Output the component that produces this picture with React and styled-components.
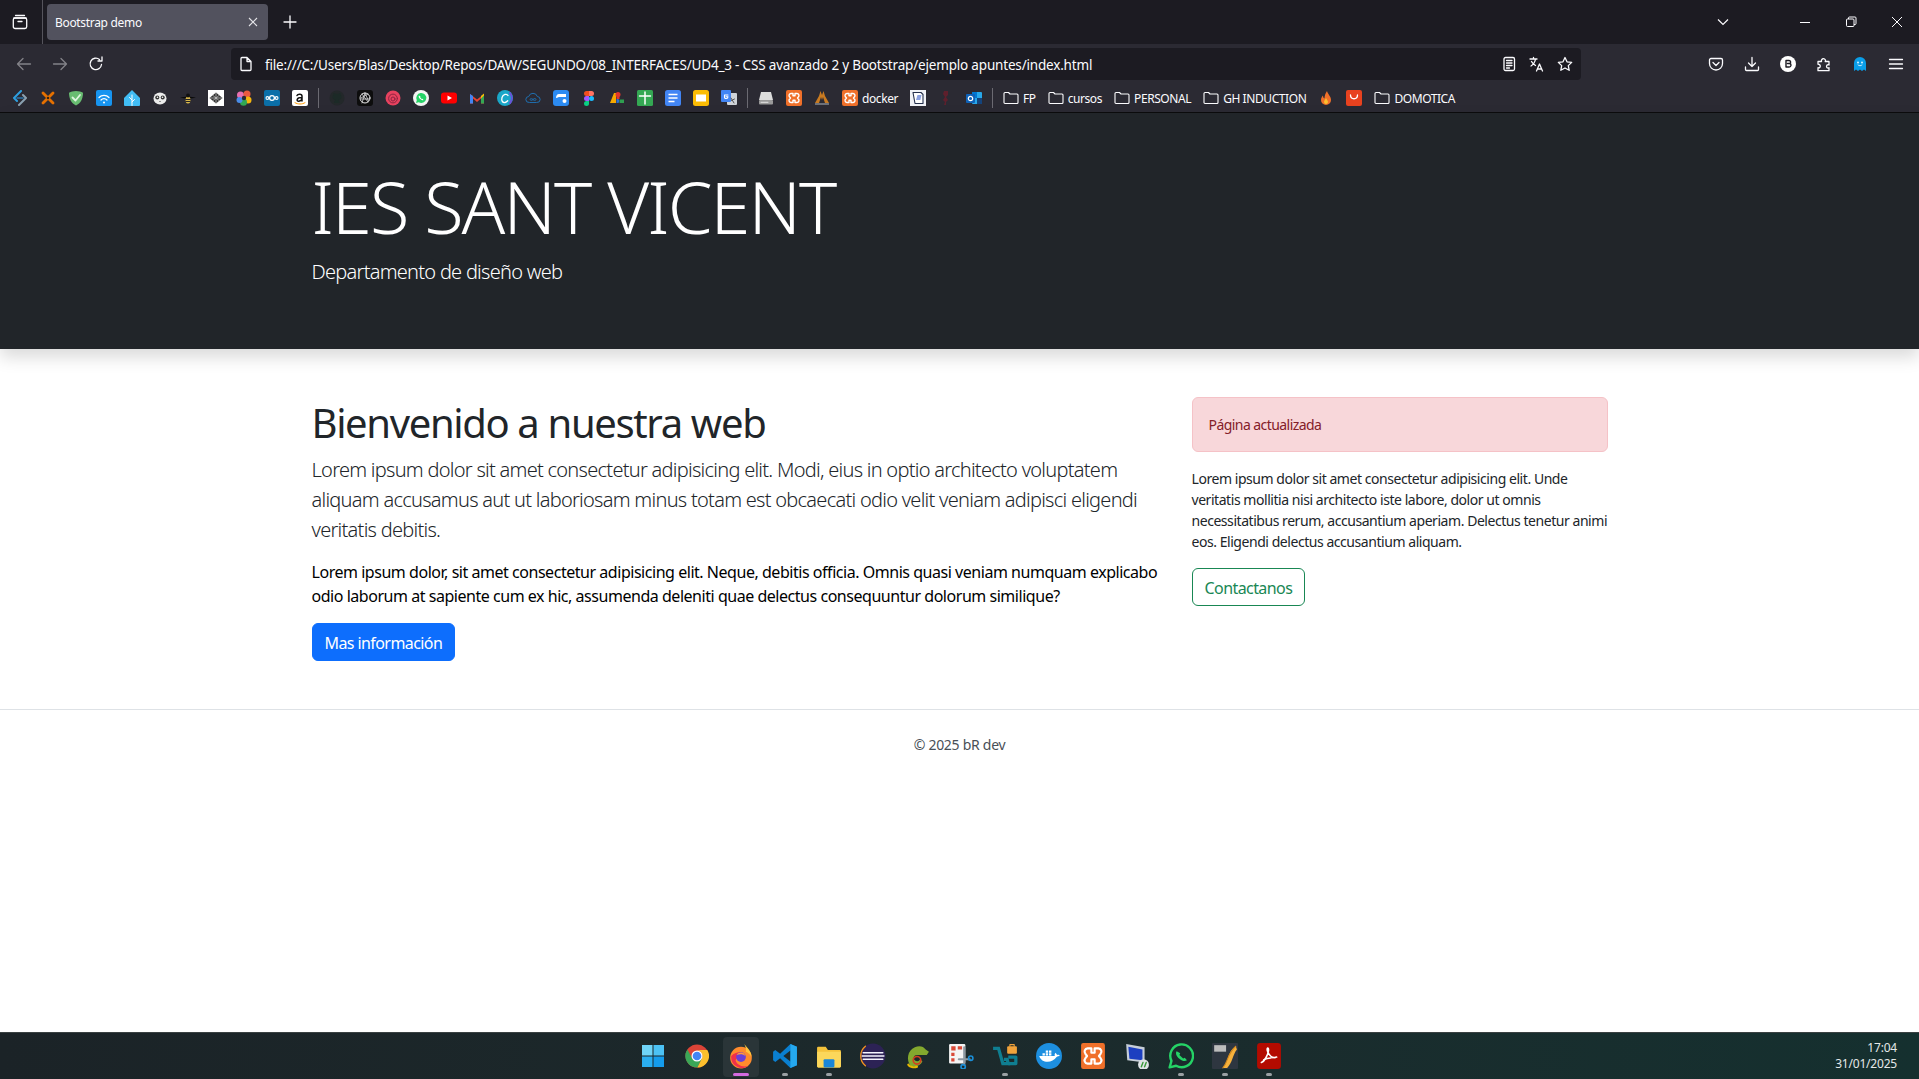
import React from "react";
import styled, { createGlobalStyle } from "styled-components";

const Global = createGlobalStyle`
  html, body { margin: 0; padding: 0; background: #fff; }
  * { box-sizing: border-box; }
  body { font-family: "Noto Sans", "Open Sans", sans-serif; color: #212529; overflow: hidden; }
`;

const Screen = styled.div`
  width: 1919px; height: 1079px; display: flex; flex-direction: column; overflow: hidden; background: #fff;
`;

/* Browser chrome */
const TitleBar = styled.div`
  height: 44px; flex: none; background: #1c1b22; display: flex; align-items: center; color: #fbfbfe;
`;
const TabGroupBtn = styled.div`
  width: 43px; height: 44px; display: flex; align-items: center; justify-content: center; padding-right: 3px; border-right: 1px solid #55545c; margin-right: 4px;
`;
const Tab = styled.div`
  width: 221px; height: 36px; border-radius: 4px; background: #52525e; display: flex; align-items: center; justify-content: space-between;
  padding: 0 8px 0 8px; font-size: 12px; letter-spacing: -0.32px; color: #fbfbfe;
`;
const PlusBtn = styled.div`
  width: 16px; height: 16px; margin-left: 14px; display: flex;
`;
const WindowCtrls = styled.div`
  margin-left: auto; margin-right: -1px; display: flex; align-items: center;
`;
const CtrlBtn = styled.div`
  width: ${(p) => p.$w || 46}px; display: flex; justify-content: center;
`;

const NavBar = styled.div`
  height: 40px; flex: none; background: #2b2a33; display: flex; align-items: center; color: #fbfbfe;
`;
const NavBtns = styled.div`
  width: 231px; padding-left: 16px; display: flex; gap: 20px; flex: none;
`;
const NavIcon = styled.div`
  width: 16px; height: 16px; display: flex; opacity: ${(p) => (p.$dim ? 0.42 : 1)};
`;
const UrlBar = styled.div`
  width: 1350px; height: 32px; background: #1c1b22; border-radius: 4px; display: flex; align-items: center; padding: 0 8px 0 7px; flex: none;
`;
const UrlText = styled.div`
  margin-left: 11px; padding-top: 2px; font-size: 13.5px; letter-spacing: -0.18px; white-space: nowrap; color: #fbfbfe; flex: 1;
`;
const UrlActions = styled.div`
  display: flex; gap: 12px;
`;
const ToolIcons = styled.div`
  margin-left: auto; padding-right: 15px; display: flex; gap: 20px;
`;

const BookmarkBar = styled.div`
  height: 29px; flex: none; background: #2b2a33; border-bottom: 1px solid #0c0c0d; display: flex; align-items: center; padding: 0 0 0 6px; color: #fbfbfe;
`;
const BookmarkItem = styled.div`
  display: flex; align-items: center; gap: 4px; padding: 0 6px; font-size: 12px; letter-spacing: -0.42px; white-space: nowrap; height: 16px;
`;
const BookmarkSep = styled.div`
  width: 9px; height: 20px; flex: none; display: flex; justify-content: center;
  &::before { content: ""; width: 1px; background: #6b6a72; }
`;

/* Page */
const Page = styled.div`
  flex: 1; display: flex; flex-direction: column; min-height: 0;
`;
const Hero = styled.header`
  background: #212529; color: #fff; padding: 48px 0; box-shadow: 0 8px 16px rgba(0,0,0,.15); position: relative;
`;
const Container = styled.div`
  width: 1320px; margin: 0 auto; padding: 0 12px;
`;
const HeroTitle = styled.h1`
  margin: 0 0 8px; padding-top: 2px; font-size: 72px; line-height: 1.2; font-weight: 300; letter-spacing: -1.9px;
`;
const HeroLead = styled.p`
  margin: 0 0 14px; font-size: 20px; line-height: 30px; font-weight: 300; letter-spacing: -0.74px;
`;
const Main = styled.main`
  padding: 48px 0;
`;
const Row = styled.div`
  display: grid; grid-template-columns: 868px 416px; column-gap: 12px;
`;
const Heading = styled.h2`
  margin: 0 0 8px; padding-top: 2px; font-size: 40px; line-height: 1.2; font-weight: 400; letter-spacing: -1.35px;
`;
const Lead = styled.p`
  margin: 0 0 15px; font-size: 20px; line-height: 30px; font-weight: 300; letter-spacing: -0.73px; width: 860px;
`;
const Body = styled.p`
  margin: 0 0 15px; font-size: 16px; line-height: 24px; letter-spacing: -0.465px; color: #000;
`;
const Button = styled.span`
  display: inline-block; height: 38px; padding: 7px 12px 5px; border-radius: 6px; font-size: 16px; line-height: 24px; letter-spacing: -0.58px;
  border: 1px solid ${(p) => (p.$outline ? "#198754" : "#0d6efd")};
  background: ${(p) => (p.$outline ? "transparent" : "#0d6efd")};
  color: ${(p) => (p.$outline ? "#198754" : "#fff")};
`;
const Alert = styled.div`
  height: 55px; padding: 16px; margin-bottom: 16px; background: #f8d7da; border: 1px solid #f5c2c7; border-radius: 6px; color: #842029;
  font-size: 14px; line-height: 21px; letter-spacing: -0.56px;
`;
const Small = styled.p`
  margin: 0 0 16px; font-size: 14px; line-height: 21px; letter-spacing: -0.45px;
`;
const Footer = styled.footer`
  border-top: 1px solid #dee2e6; padding: 24px 0; text-align: center; font-size: 14px; line-height: 21px; letter-spacing: -0.28px; color: #495057;
`;

/* Taskbar */
const Taskbar = styled.div`
  height: 47px; flex: none; position: relative; border-top: 1px solid #3a4142; background: linear-gradient(90deg, #1b2327 0%, #1c2a2c 50%, #15302f 100%);
  display: flex; justify-content: center; align-items: center;
`;
const TaskIcons = styled.div`
  display: flex; margin-left: 3px;
`;
const TaskItem = styled.div`
  width: 44px; height: 44px; display: flex; align-items: center; justify-content: center; position: relative;
  & > svg { position: relative; }
  &::before {
    content: ""; display: ${(p) => (p.$active ? "block" : "none")}; position: absolute; top: 3px; bottom: 1px; left: 4px; right: 4px; border-radius: 4px; background: #2a3538;
  }
  &::after {
    content: ""; display: ${(p) => (p.$open || p.$active ? "block" : "none")}; position: absolute; bottom: 2px; left: 50%; height: 3px; border-radius: 2px;
    width: ${(p) => (p.$active ? 16 : 6)}px; transform: translateX(-50%); background: ${(p) => (p.$active ? "#d36be0" : "#9aa0a3")};
  }
`;
const Clock = styled.div`
  position: absolute; right: 22px; top: 7px; text-align: right; color: #e4e8e8; font-size: 12px; line-height: 16px; letter-spacing: -0.2px;
`;

const S = ({ children, v = 16, size, fill = "none", stroke = "none", sw }) => (
  <svg width={size || v} height={size || v} viewBox={`0 0 ${v} ${v}`} fill={fill} stroke={stroke} strokeWidth={sw} strokeLinecap="round" strokeLinejoin="round">{children}</svg>
);
const L = ({ children }) => <S stroke="#fbfbfe" sw={1.3}>{children}</S>;

const Folder = () => <S stroke="#fbfbfe" sw={1.1}><path d="M1 3.5a1 1 0 0 1 1-1h3.5l1.5 1.5h7a1 1 0 0 1 1 1v7.5a1 1 0 0 1-1 1H2a1 1 0 0 1-1-1z"/></S>;
const Xampp = () => <S><rect width="16" height="16" rx="2" fill="#f0702a"/><path d="M5 3.5h2v2.2h2V3.5h2a2 2 0 0 1 1.4 3.4L11.5 8l.9 1.1A2 2 0 0 1 11 12.5H9v-2.2H7v2.2H5a2 2 0 0 1-1.4-3.4L4.5 8l-.9-1.1A2 2 0 0 1 5 3.5z" stroke="#fff" strokeWidth="1.4"/></S>;

const group1 = [
  <S><path d="M9 1 2 8l3 3" stroke="#2d9fe0" strokeWidth="2"/><path d="M7 15l7-7-3-3" stroke="#8aa0b0" strokeWidth="2"/><path d="M5 8h6" stroke="#2d78b0" strokeWidth="1.6"/></S>,
  <S><path d="M3 3l10 10" stroke="#e57000" strokeWidth="2.800"/><path d="M13 3 3 13" stroke="#e57000" strokeWidth="2.800"/><path d="M6.500 8 8 6.500 9.500 8 8 9.500z" fill="#1a1a1a"/></S>,
  <S><path d="M8 1c3 0 5 .8 7 1.8C15 9 12.500 13.500 8 15.500 3.500 13.500 1 9 1 2.800 3 1.800 5 1 8 1z" fill="#68bc71"/><path d="M4.500 7.500 7.500 10.500 12 5" stroke="#dff5e0" strokeWidth="1.8"/></S>,
  <S><rect width="16" height="16" rx="2" fill="#1794f0"/><path d="M3 7.500a7 7 0 0 1 10 0M5 10a4 4 0 0 1 6 0" stroke="#fff" strokeWidth="1.2"/><circle cx="8" cy="12.500" r="1" fill="#fff"/></S>,
  <S><path d="M8 0 16 8v7a1 1 0 0 1-1 1H1a1 1 0 0 1-1-1V8z" fill="#41bdf5"/><path d="M8 15.500V5M8 10 5.500 7.500M8 12l2.500-2.500" stroke="#fff" strokeWidth="1"/></S>,
  <S><ellipse cx="8" cy="8.500" rx="6.500" ry="6" fill="#ececec"/><circle cx="5.300" cy="7.500" r="2" fill="#333"/><circle cx="10.700" cy="7.500" r="2" fill="#333"/><circle cx="5.500" cy="7.300" r=".8" fill="#fff"/><circle cx="10.500" cy="7.300" r=".8" fill="#fff"/><path d="M7 11h2l-1 1z" fill="#333"/></S>,
  <S><path d="M0 7.500c3-.5 5-.8 8-.8s5 .3 8 .8c-3 .8-5 1-8 1s-5-.2-8-1z" fill="#0a0a0a"/><ellipse cx="8" cy="10" rx="2.500" ry="3.500" fill="#d8b64a"/><path d="M5.600 9.500h4.800M5.800 11.500h4.400" stroke="#222" strokeWidth="1"/><circle cx="8" cy="5.500" r="2" fill="#111"/></S>,
  <S><rect width="16" height="16" fill="#fff"/><path d="M8 2.500 14.500 8 8 13.500 1.500 8z" fill="#333"/><path d="M2 8h12M8 3v10M5 5.500l6 5M11 5.500l-6 5" stroke="#ccc" strokeWidth=".7"/></S>,
  <S><circle cx="4.500" cy="5" r="3.500" fill="#e86fb0"/><circle cx="11" cy="4" r="3.500" fill="#ea5a3f"/><circle cx="12" cy="10" r="3.500" fill="#f6b60d"/><circle cx="7.500" cy="12.300" r="3.500" fill="#31a853"/><circle cx="3.500" cy="10" r="3" fill="#4a8ce8"/><circle cx="8" cy="8" r="2.200" fill="#2b2a33"/></S>,
  <S><rect width="16" height="16" rx="2" fill="#0b6fa8"/><circle cx="8" cy="8" r="2.400" stroke="#fff" strokeWidth="1.300"/><circle cx="3.400" cy="8" r="1.400" stroke="#fff" strokeWidth="1.100"/><circle cx="12.600" cy="8" r="1.400" stroke="#fff" strokeWidth="1.100"/></S>,
  <S><rect width="16" height="16" rx="2" fill="#fff"/><path d="M5 5.500c.6-1.500 5-2 5 .8V11M10 7.500c-6-.2-5.700 4-3.200 3.700 1.500-.2 3.200-1.500 3.200-3" stroke="#111" strokeWidth="1.500"/><path d="M3 12.700c3 1.800 7 1.800 10 0" stroke="#f90" strokeWidth="1"/></S>,
];
const group2 = [
  <S><circle cx="8" cy="8" r="7.500" fill="#23282a"/><path d="M5 13c0-2 1-2.500 1.500-3-2-.3-3-1.300-3-3.300 0-1 .4-1.500.8-2 0-.8 0-1.200.3-1.700.8 0 1.400.5 1.900.8h3c.5-.3 1-.8 1.900-.8.300.5.300.9.300 1.700.4.500.8 1 .8 2 0 2-1 3-3 3.300.5.500 1 1 1 3" fill="#1c2a27"/></S>,
  <S><rect width="16" height="16" rx="3" fill="#0d0d0d"/><circle cx="8" cy="8" r="5" stroke="#e8e8e8" strokeWidth="1"/><path d="M8 3 5 13M11 4 4 8M12.500 9l-8 0M5 4l6 8M11.500 11 8 3" stroke="#d8d8d8" strokeWidth=".8"/></S>,
  <S><circle cx="8" cy="8" r="7.500" fill="#e8425f"/><circle cx="8" cy="8.500" r="4.400" stroke="#8e2440" strokeWidth="1"/><circle cx="8" cy="9" r="2" stroke="#8e2440" strokeWidth="1"/></S>,
  <S><circle cx="8" cy="8" r="8" fill="#f4f4f4"/><path d="M3 13l.8-2.800A5 5 0 1 1 5.800 12.300z" fill="#25d366"/><path d="M6 5.500c-.8 1 0 2.500 1.200 3.600 1.200 1.100 2.500 1.500 3.300.8l-1-1.200-.8.400-1.500-1.500.4-.8z" fill="#fff"/></S>,
  <S><rect y="2.500" width="16" height="11" rx="3" fill="#f00"/><path d="M6.500 5.500 11 8l-4.500 2.500z" fill="#fff"/></S>,
  <S><path d="M1 13.500V4l7 5.500L15 4v9.500h-3V8.500L8 12 4 8.500v5z" fill="#ea4335"/><path d="M1 13.500V4l3 2v7.500z" fill="#4285f4"/><path d="M15 13.500V4l-3 2v7.500z" fill="#34a853"/><path d="M12 6l3-2.500V5.500l-3 3z" fill="#fbbc04"/></S>,
  <S><circle cx="8" cy="8" r="8" fill="#1aa7c8"/><path d="M11 5.500C10 3.500 6 4 5 7.500s1 5.500 3 5c1.200-.3 2-1 2.700-1.800" stroke="#fff" strokeWidth="1.300"/><path d="M13 3a8 8 0 0 1 0 10" stroke="#6b4fd8" strokeWidth="2"/></S>,
  <S><path d="M4 12.500a3 3 0 0 1-.3-6 4.500 4.500 0 0 1 8.600 0 3 3 0 0 1-.3 6z" stroke="#1f6fb0" strokeWidth="1"/><path d="M8 9.500c-1-1.300-3-1-3 0s2 1.300 3 0 3-1.300 3 0-2 1.300-3 0z" stroke="#1f6fb0" strokeWidth=".9"/></S>,
  <S><rect width="16" height="16" rx="3" fill="#2c8bf2"/><path d="M3 8c0-2 1-4 3-4h7v3H7c-1.500 0-2 .5-4 1z" fill="#fff"/><circle cx="11.500" cy="11" r="2" fill="#fff"/></S>,
  <S><path d="M8 1h2.500a2.500 2.500 0 0 1 0 5H8z" fill="#ff7262"/><path d="M8 1H5.500a2.500 2.500 0 0 0 0 5H8z" fill="#f24e1e"/><path d="M8 6H5.500a2.500 2.500 0 0 0 0 5H8z" fill="#a259ff"/><circle cx="10.500" cy="8.500" r="2.500" fill="#1abcfe"/><path d="M8 11H5.500A2.500 2.500 0 1 0 8 13.500z" fill="#0acf83"/></S>,
  <S><path d="M1 13 5 3h2v10z" fill="#f6a800"/><rect x="7.500" y="3" width="3" height="6" fill="#e2352c"/><circle cx="9" cy="4.500" r="2.500" fill="#e2352c"/><path d="M7.500 9h2a3 3 0 0 1 0 4h-2z" fill="#2a6fdb"/><path d="M10.500 9.500h4.500V13h-4.500z" fill="#2f9e50"/></S>,
  <S><rect width="16" height="16" rx="1.500" fill="#34a853"/><path d="M8 2v12M2.500 6h11" stroke="#fff" strokeWidth="1.500"/></S>,
  <S><rect width="16" height="16" rx="2.500" fill="#4285f4"/><path d="M3.500 4.500h9M3.500 8h9M3.500 11.500h6" stroke="#fff" strokeWidth="1.400" strokeLinecap="butt"/></S>,
  <S><rect width="16" height="16" rx="2.500" fill="#fbbc04"/><rect x="3" y="4.500" width="10" height="7" fill="#fff"/></S>,
  <S><rect x="6" y="3" width="10" height="12" rx="1" fill="#cfd3d8"/><rect x="0" y="0" width="10" height="12" rx="1" fill="#4285f4"/><path d="M7 5H3.500v2.500c0 1.500 3.500 1.500 3.500-.8H5" stroke="#fff" strokeWidth="1.100"/><path d="M10 8l3 5M13.500 9l-3 1.500" stroke="#555" strokeWidth="1"/></S>,
];
const group3 = [
  <S><path d="M3 2h10l2 8H1z" fill="#dcdcdc"/><rect x="1" y="10" width="14" height="4.500" rx="1" fill="#9a9a9a"/><path d="M3 12.300h7" stroke="#e4e4e4"/></S>,
  <Xampp />,
  <S><path d="M1 13 5 6l1.500-5L8 5l1.500-4L11 6l4 7z" fill="#c97a20"/><path d="M5 13 7 7l1 3 1-3 2 6z" fill="#2b2a33"/><rect x="1" y="13" width="14" height="2" fill="#6d7078"/></S>,
];
const group4 = [
  <S><rect width="16" height="16" fill="#f0f2f6"/><path d="M3 2.500h8l2 2v9H5z" fill="#fff" stroke="#24304c" strokeWidth="1.100"/><path d="M6 10l1.500-5h4l-1.200 5z" fill="#8aa0e0"/></S>,
  <S><path d="M6 1h4v4L8 7l2 3-2 2v3H6l1-3-2-2 2-3-2-3z" fill="#5e1f2c"/></S>,
  <S><rect x="6" y="2" width="10" height="12" rx="1" fill="#28a8ea"/><rect x="6" y="2" width="5" height="6" fill="#0078d4"/><rect x="11" y="8" width="5" height="6" fill="#14447d"/><rect y="4" width="9" height="9" rx="1" fill="#0f62b8"/><circle cx="4.500" cy="8.500" r="2.200" stroke="#fff" strokeWidth="1.200"/></S>,
];

const Win = () => <S v={24} size={24}><path d="M1 1h10.500v10.500H1z" fill="#6fd4f7"/><path d="M12.500 1H23v10.500H12.500z" fill="#4cc2f4"/><path d="M1 12.500h10.500V23H1z" fill="#2aaef0"/><path d="M12.500 12.500H23V23H12.500z" fill="#149cec"/></S>;
const tasks = [
  { i: <Win /> },
  { i: <S v={24} size={24}><circle cx="12" cy="12" r="11.500" fill="#db4437"/><path d="M12 6h10.300a11.500 11.500 0 0 1-10 17.500L17 14a6 6 0 0 0-5-8z" fill="#fbc02d"/><path d="M12.300 23.500A11.500 11.500 0 0 1 2.400 5.500L7 14a6 6 0 0 0 10 0z" fill="#3aa757"/><circle cx="12" cy="12" r="5.500" fill="#fff"/><circle cx="12" cy="12" r="4.300" fill="#4285f4"/></S> },
  { active: true, i: <S v={24} size={26}><circle cx="12" cy="13.500" r="10" fill="#ff8b2d"/><path d="M3 12a10 10 0 0 0 16 9c-6 2-11-1-12-5 1-3 5-4 8-3l-2-4c-3-1-7 0-10 3z" fill="#f0304a"/><path d="M15 1c3 4 7 7 6.500 12-1-3-3-4-5-5 .5-3-.500-5-1.500-7z" fill="#ffc53a"/><circle cx="12" cy="13" r="4.500" fill="#6a3fd8"/><path d="M8 11c2-3 7-3 8 1-2-2-5-2-8-1z" fill="#ff9a3c"/></S> },
  { open: true, i: <S v={24} size={26}><path d="M17 1 7.500 10 3 6.500 1 8v8l2 1.500L7.500 14l9.500 9 6-2.500V3.500z" fill="#0a7fd0"/><path d="M17 7 10.500 12 17 17z" fill="#1c2a2c"/><path d="M17 1l6 2.500v17L17 23z" fill="#25a8ee"/></S> },
  { open: true, i: <S v={24} size={26}><path d="M1 4.500a1 1 0 0 1 1-1h7l2 3h11a1 1 0 0 1 1 1v14a1 1 0 0 1-1 1H2a1 1 0 0 1-1-1z" fill="#f5c33b"/><path d="M1 8h22v13.500a1 1 0 0 1-1 1H2a1 1 0 0 1-1-1z" fill="#fbd75b"/><rect x="7" y="15" width="10" height="7.500" rx="1" fill="#1a86d8"/></S> },
  { i: <S v={24} size={26}><circle cx="12" cy="12" r="11.500" fill="#2c2255"/><path d="M3 9h18M2 12h20M3 15h18" stroke="#f5f5ff" strokeWidth="1.500"/><path d="M5 3A11.500 11.500 0 0 0 5 21" stroke="#f7941e" strokeWidth="1.200"/></S> },
  { i: <S v={24} size={26}><path d="M6 21c-4-5-3-14 4-17 4-2 8-1 10 2l3 2-2 3H12c-3 0-4 3-2 5 1.500 1.500 4 1 5-1l2 2c-2 4-7 6-11 4z" fill="#83a82e"/><circle cx="12" cy="16" r="3.500" stroke="#d43f1f" strokeWidth="1.500"/><path d="M4 20c1 2 5 3 8 2" stroke="#e6b800" strokeWidth="2"/></S> },
  { i: <S v={24} size={26}><rect x="1" y="1" width="15" height="18" rx="1" fill="#f4f4f4"/><path d="M3 3h4v4H3zM3 9h3v3H3zM3 14h3v3H3zM9 3h4v3H9z" fill="#d94a38"/><path d="M15 4v16M10 15h10" stroke="#8d99a3" strokeWidth="2"/><circle cx="21" cy="14" r="2" stroke="#1a8fd8" strokeWidth="1.500"/><circle cx="14" cy="22" r="2" stroke="#1a8fd8" strokeWidth="1.500"/></S> },
  { open: true, i: <S v={24} size={26}><path d="M1 5h5l4 14h5l-1-4H11" stroke="#0f7e91" strokeWidth="3" strokeLinecap="butt" strokeLinejoin="miter"/><path d="M15 19h7v-6h-7" stroke="#0f7e91" strokeWidth="3" strokeLinecap="butt"/><rect x="14" y="3" width="9" height="7" rx="1" fill="#f1a33b"/><path d="M16.500 3V1.500h4V3" stroke="#f1a33b"/></S> },
  { i: <S v={24} size={26}><circle cx="12" cy="12" r="12" fill="#1d8fe0"/><path d="M3 12c2 7 12 7 16 1 1-1 2-1 3-1-.5-1-1.500-1.500-2.500-1-.5-1-1-1.500-1.500-2-1 1-1 2.500-.5 3H3z" fill="#fff"/><path d="M6 9.500h2.200v2H6zM9 9.500h2.200v2H9zM12 9.500h2.200v2H12zM9 7h2.200v2H9zM12 7h2.200v2H12z" fill="#fff"/></S> },
  { i: <S v={24} size={26}><rect x="1" y="0" width="22" height="24" rx="2" fill="#f0702a"/><path d="M7 5h3.500v4h3V5H17a3 3 0 0 1 2 5l-1.500 2 1.500 2a3 3 0 0 1-2 5h-3.500v-4h-3v4H7a3 3 0 0 1-2-5l1.500-2L5 10a3 3 0 0 1 2-5z" stroke="#fff" strokeWidth="2"/></S> },
  { i: <S v={24} size={26}><path d="M2 1l17 3v14L3 16z" fill="#c6ced8"/><path d="M4 3.500l13 2.500v10L5 14.500z" fill="#1c3fc0"/><circle cx="18" cy="20" r="5" fill="#dfe3e6"/><path d="M16 22l1.500-4M19 22l1.500-4" stroke="#3a9a3a" strokeWidth="1.300"/></S> },
  { open: true, i: <S v={24} size={26}><path d="M1.500 22.500l1.700-6A10.500 10.500 0 1 1 7.500 21z" stroke="#25d366" strokeWidth="2.200"/><path d="M8 7.500c-1.500 2 0 5 2.500 7s5 3 7 1.500l-2-2.500-1.500.8-3.500-3.300.8-1.500z" fill="#25d366"/></S> },
  { open: true, i: <S v={24} size={26}><rect width="24" height="24" rx="1" fill="#2e3640"/><path d="M10 23C16 16 14 8 22 3l1 3c-4 5-4 12-9 17z" fill="#f7b13c"/><path d="M10 23c5-6 4-13 12-20" stroke="#d48a1f" strokeWidth="1"/><path d="M2 2h11v6H2z" fill="#bdbdbd"/></S> },
  { open: true, i: <S v={24} size={26}><rect x="1" y="0" width="22" height="24" rx="3" fill="#b30b00"/><path d="M5 18c3-1 6-7 6.500-11 .2-2-.5-3-1-2-.7 1.500.8 5 3 7 1.500 1.300 4 1.500 5.500 1" stroke="#fff" strokeWidth="1.500"/><path d="M7 15.500c3-1.500 7-2 11-2" stroke="#fff" strokeWidth="1.200"/></S> },
];

export default function App() {
  return (
    <Screen>
      <Global />
      <TitleBar>
        <TabGroupBtn>
          <S stroke="#fbfbfe" sw={1.3}><path d="M3.500 1.500h9M2 4h12"/><rect x="1.300" y="4" width="13.400" height="10.500" rx="1.800"/><path d="M6 7.500h4"/></S>
        </TabGroupBtn>
        <Tab>
          Bootstrap demo
          <svg width="14" height="14" viewBox="0 0 14 14" stroke="#e4e4e8" strokeWidth="1.100"><path d="M3 3l8 8M11 3l-8 8"/></svg>
        </Tab>
        <PlusBtn><L><path d="M8 2v12M2 8h12"/></L></PlusBtn>
        <WindowCtrls>
          <CtrlBtn $w={60}><svg width="16" height="16" viewBox="0 0 16 16" fill="none" stroke="#fbfbfe" strokeWidth="1.200"><path d="M3 5.500 8 10.500l5-5"/></svg></CtrlBtn>
          <CtrlBtn $w={29}/>
          <CtrlBtn><svg width="12" height="12" viewBox="0 0 12 12" stroke="#fbfbfe"><path d="M1 6.500h10"/></svg></CtrlBtn>
          <CtrlBtn><svg width="12" height="12" viewBox="0 0 12 12" fill="none" stroke="#fbfbfe"><rect x="1.500" y="3" width="7.500" height="7.500" rx="1"/><path d="M3.500 3V2a1 1 0 0 1 1-1H10a1 1 0 0 1 1 1v5.500a1 1 0 0 1-1 1H9"/></svg></CtrlBtn>
          <CtrlBtn><svg width="12" height="12" viewBox="0 0 12 12" stroke="#fbfbfe"><path d="M1 1l10 10M11 1 1 11"/></svg></CtrlBtn>
        </WindowCtrls>
      </TitleBar>
      <NavBar>
        <NavBtns>
          <NavIcon $dim><L><path d="M14.500 8h-13M7 2.500 1.500 8 7 13.500"/></L></NavIcon>
          <NavIcon $dim><L><path d="M1.500 8h13M9 2.500 14.500 8 9 13.500"/></L></NavIcon>
          <NavIcon><L><path d="M13.500 8.500A5.700 5.700 0 1 1 11.500 3.500M14 1v4h-4"/></L></NavIcon>
        </NavBtns>
        <UrlBar>
          <NavIcon><L><path d="M3 2.500a1 1 0 0 1 1-1h5l4 4v8a1 1 0 0 1-1 1H4a1 1 0 0 1-1-1zM9 1.500V5.500h4"/></L></NavIcon>
          <UrlText>file:///C:/Users/Blas/Desktop/Repos/DAW/SEGUNDO/08_INTERFACES/UD4_3 - CSS avanzado 2 y Bootstrap/ejemplo apuntes/index.html</UrlText>
          <UrlActions>
            <NavIcon><L><rect x="3" y="1.500" width="10.500" height="13" rx="1.500"/><path d="M5.500 4.500h5.500M5.500 7h5.500M5.500 9.500h5.500M5.500 12h3"/></L></NavIcon>
            <NavIcon><L><path d="M1 3h7M4.500 1.500V3M2 10c2.500-1.500 4-4 4.500-7M2.500 5.500c1 2 2.500 3 4 4M7.500 15l3-7 3 7M8.500 13h4"/></L></NavIcon>
            <NavIcon><L><path d="M8 1.500l2 4.300 4.700.6-3.400 3.200.9 4.700L8 12l-4.200 2.300.9-4.700L1.300 6.400 6 5.800z"/></L></NavIcon>
          </UrlActions>
        </UrlBar>
        <ToolIcons>
          <NavIcon><L><path d="M1.500 4a1.500 1.500 0 0 1 1.500-1.500h10A1.500 1.500 0 0 1 14.500 4v3.500a6.500 6.500 0 0 1-13 0zM5 6.500 8 9.500l3-3"/></L></NavIcon>
          <NavIcon><L><path d="M8 1.500v9M4.500 7 8 10.500 11.500 7M1.500 11v2.500a1 1 0 0 0 1 1h11a1 1 0 0 0 1-1V11"/></L></NavIcon>
          <NavIcon><S><circle cx="8" cy="8" r="8" fill="#fff"/><path d="M6 4.500h3a1.600 1.600 0 0 1 .8 3 1.800 1.800 0 0 1-.6 3.500H6zM7.500 7.500h1.700" stroke="#1c1b22" strokeWidth="1.400"/></S></NavIcon>
          <NavIcon><L><path d="M2 5.500h3.500c-.8-3 3.500-4 4-1 .1.500 0 .7-.3 1H13V9c-.4-.3-.6-.4-1-.3-2 .500-2 3 0 3.300.4 0 .6 0 1-.3v3H2v-3c2.500 1 3.500-3 0-3.500z"/></L></NavIcon>
          <NavIcon><S><path d="M2 15V7a6 6 0 0 1 12 0v8l-2-1.500L10 15l-2-1.500L6 15l-2-1.500z" fill="#0a9ee8"/><circle cx="6" cy="6.500" r="1" fill="#d8f2ff"/><circle cx="10" cy="6.500" r="1" fill="#d8f2ff"/><path d="M6 9c1 1 3 1 4 0" stroke="#d8f2ff" strokeWidth=".9"/></S></NavIcon>
          <NavIcon><L><path d="M1.500 3.500h13M1.500 8h13M1.500 12.500h13"/></L></NavIcon>
        </ToolIcons>
      </NavBar>
      <BookmarkBar>
        {group1.map((ic, i) => <BookmarkItem key={i}>{ic}</BookmarkItem>)}
        <BookmarkSep />
        {group2.map((ic, i) => <BookmarkItem key={i}>{ic}</BookmarkItem>)}
        <BookmarkSep />
        {group3.map((ic, i) => <BookmarkItem key={i}>{ic}</BookmarkItem>)}
        <BookmarkItem><Xampp />docker</BookmarkItem>
        {group4.map((ic, i) => <BookmarkItem key={i}>{ic}</BookmarkItem>)}
        <BookmarkSep />
        <BookmarkItem><Folder />FP</BookmarkItem>
        <BookmarkItem><Folder />cursos</BookmarkItem>
        <BookmarkItem><Folder />PERSONAL</BookmarkItem>
        <BookmarkItem><Folder />GH INDUCTION</BookmarkItem>
        <BookmarkItem><S><path d="M9 1c.5 3 4 5 4 9a5 5 0 0 1-10 0c0-2 1-3.500 2-4.500 0 1.500.5 2.500 1.500 3C6.500 6 7.500 3 9 1z" fill="#f0702a"/><path d="M8 8c.5 1.500 2 2.500 2 4a2 2 0 0 1-4 0c0-1.500 1.500-2.500 2-4z" fill="#fbc02d"/></S></BookmarkItem>
        <BookmarkItem><S><rect width="16" height="16" rx="2" fill="#e8421f"/><path d="M4.500 5c0 5 7 5 7 0" stroke="#fff" strokeWidth="1.300"/></S></BookmarkItem>
        <BookmarkItem><Folder />DOMOTICA</BookmarkItem>
      </BookmarkBar>
      <Page>
        <Hero>
          <Container>
            <HeroTitle>IES SANT VICENT</HeroTitle>
            <HeroLead>Departamento de diseño web</HeroLead>
          </Container>
        </Hero>
        <Main>
          <Container>
            <Row>
              <div>
                <Heading>Bienvenido a nuestra web</Heading>
                <Lead>Lorem ipsum dolor sit amet consectetur adipisicing elit. Modi, eius in optio architecto voluptatem aliquam accusamus aut ut laboriosam minus totam est obcaecati odio velit veniam adipisci eligendi veritatis debitis.</Lead>
                <Body>Lorem ipsum dolor, sit amet consectetur adipisicing elit. Neque, debitis officia. Omnis quasi veniam numquam explicabo odio laborum at sapiente cum ex hic, assumenda deleniti quae delectus consequuntur dolorum similique?</Body>
                <Button>Mas información</Button>
              </div>
              <div>
                <Alert>Página actualizada</Alert>
                <Small>Lorem ipsum dolor sit amet consectetur adipisicing elit. Unde veritatis mollitia nisi architecto iste labore, dolor ut omnis necessitatibus rerum, accusantium aperiam. Delectus tenetur animi eos. Eligendi delectus accusantium aliquam.</Small>
                <Button $outline>Contactanos</Button>
              </div>
            </Row>
          </Container>
        </Main>
        <Footer>© 2025 bR dev</Footer>
      </Page>
      <Taskbar>
        <TaskIcons>
          {tasks.map((t, i) => <TaskItem key={i} $active={t.active} $open={t.open}>{t.i}</TaskItem>)}
        </TaskIcons>
        <Clock>17:04<br />31/01/2025</Clock>
      </Taskbar>
    </Screen>
  );
}
